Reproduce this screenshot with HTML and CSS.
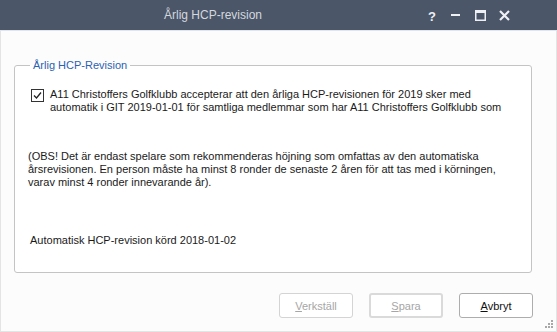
FILE: index.html
```html
<!DOCTYPE html>
<html lang="sv">
<head>
  <meta charset="UTF-8">
  <title>Årlig HCP-revision</title>
  <link rel="stylesheet" href="styles.css">
</head>
<body>
  <div class="window">
    <div class="titlebar">
      <div class="title">Årlig HCP-revision</div>
      <div class="controls">
        <span class="ctl help">?</span>
        <span class="ctl">
          <svg width="10" height="10" viewBox="0 0 10 10"><rect x="0" y="4" width="9" height="2" fill="#eef0f3"/></svg>
        </span>
        <span class="ctl">
          <svg width="11" height="11" viewBox="0 0 11 11"><rect x="0.75" y="0.75" width="9.5" height="9.5" fill="none" stroke="#eef0f3" stroke-width="1.5"/><rect x="0" y="0" width="11" height="3" fill="#eef0f3"/></svg>
        </span>
        <span class="ctl">
          <svg width="11" height="11" viewBox="0 0 11 11"><path d="M1 1 L10 10 M10 1 L1 10" stroke="#eef0f3" stroke-width="2.2"/></svg>
        </span>
      </div>
    </div>

    <div class="client">
      <fieldset class="group">
        <legend>Årlig HCP-Revision</legend>

        <label class="check-row">
          <span class="checkbox">
            <svg width="13" height="13" viewBox="0 0 13 13"><rect x="0.5" y="0.5" width="12" height="12" fill="#fff" stroke="#333"/><path d="M3 6.5 L5.5 9 L10 3.5" fill="none" stroke="#222" stroke-width="1.3"/></svg>
          </span>
          <span>A11 Christoffers Golfklubb accepterar att den årliga HCP-revisionen för 2019 sker med automatik i GIT 2019-01-01 för samtliga medlemmar som har A11 Christoffers Golfklubb som</span>
        </label>

        <p class="note">(OBS! Det är endast spelare som rekommenderas höjning som omfattas av den automatiska årsrevisionen. En person måste ha minst 8 ronder de senaste 2 åren för att tas med i körningen, varav minst 4 ronder innevarande år).</p>

        <p class="last-run">Automatisk HCP-revision körd 2018-01-02</p>
      </fieldset>

      <div class="buttons">
        <button class="btn" disabled><u>V</u>erkställ</button>
        <button class="btn default" disabled><u>S</u>para</button>
        <button class="btn"><u>A</u>vbryt</button>
      </div>

      <div class="grip">
        <svg width="8" height="8" viewBox="0 0 8 8" fill="#a8a8a8"><rect x="6" y="0" width="2" height="2"/><rect x="3" y="3" width="2" height="2"/><rect x="6" y="3" width="2" height="2"/><rect x="0" y="6" width="2" height="2"/><rect x="3" y="6" width="2" height="2"/><rect x="6" y="6" width="2" height="2"/></svg>
      </div>
    </div>
  </div>
</body>
</html>
```

FILE: styles.css
```css
body {
  margin: 0;
  font-family: "Liberation Sans", Arial, sans-serif;
  font-size: 11px;
  color: #1a1a1a;
  background: #fff;
}
.window {
  width: 557px;
  height: 332px;
  display: flex;
  flex-direction: column;
}
.titlebar {
  height: 30px;
  background-color: #4b5668;
  display: flex;
  align-items: center;
  border-bottom: 1px solid #dfe6ef;
}
.title {
  flex: 1;
  text-align: center;
  color: #d3d8df;
  font-size: 12px;
  padding-left: 6px;
}
.controls {
  width: 137px;
  display: flex;
  align-items: center;
}
.ctl {
  width: 24px;
  display: flex;
  justify-content: center;
  align-items: center;
  height: 30px;
}
.ctl.help {
  color: #eef0f3;
  font-weight: bold;
  font-size: 13px;
  padding-top: 2px;
}
.client {
  flex: 1;
  position: relative;
  background: #fcfcfc;
  border: 1px solid #e4e4e4;
  border-top: none;
  padding: 28px 24px 0 13px;
}
.group {
  margin: 0;
  padding: 17px 12px 0 13px;
  height: 214px;
  box-sizing: border-box;
  border: 1px solid #c4c4c4;
  border-radius: 3px;
  background: #fff;
}
.group legend {
  color: #2b61b0;
  padding: 0 3px;
  margin-left: 2px;
}
.check-row {
  display: flex;
  gap: 6px;
  line-height: 13px;
  margin-left: 3px;
}
.checkbox {
  flex: none;
  height: 13px;
  padding-top: 1px;
}
.note {
  margin: 36px 0 0 0;
  line-height: 13px;
}
.last-run {
  margin: 45px 0 0 2px;
  line-height: 13px;
}
.buttons {
  display: flex;
  justify-content: flex-end;
  gap: 16px;
  margin-top: 20px;
  margin-right: -1px;
}
.btn {
  width: 74px;
  height: 25px;
  font-family: "Liberation Sans", Arial, sans-serif;
  font-size: 11px;
  background: #fff;
  border: 1px solid #adadad;
  border-radius: 3px;
  color: #111;
  padding: 0;
}
.btn:disabled {
  border-color: #d4d4d4;
  color: #a6a6a6;
}
.btn.default {
  border: 2px solid #dadada;
}
.grip {
  position: absolute;
  right: 3px;
  bottom: 3px;
  line-height: 0;
}
```
